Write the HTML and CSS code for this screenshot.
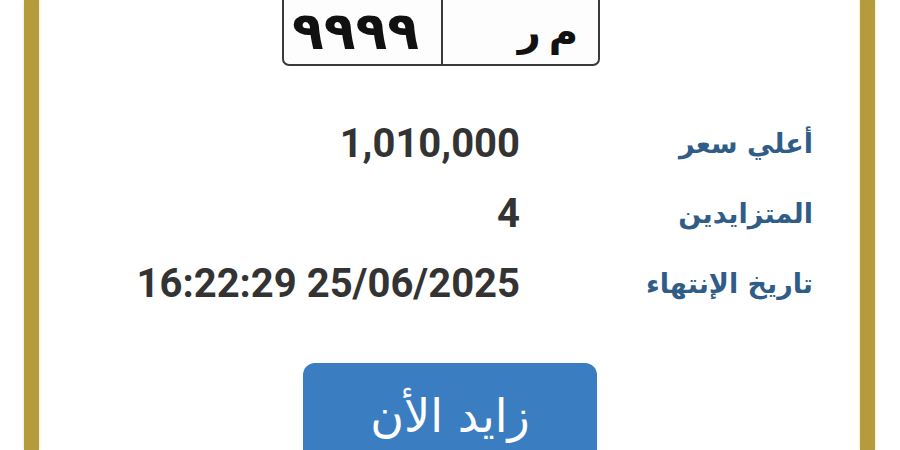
FILE: index.html
```html
<!DOCTYPE html>
<html lang="ar">
<head>
<meta charset="utf-8">
<link rel="stylesheet" href="styles.css">
</head>
<body>
<div class="frame">
  <div class="bar"></div>
  <main class="card">
    <div class="plate">
      <div class="plate-cell plate-num" dir="rtl">٩٩٩٩</div>
      <div class="plate-cell plate-letters" dir="rtl">م ر</div>
    </div>
    <div class="rows">
      <div class="row">
        <div class="value">1,010,000</div>
        <div class="label" dir="rtl">أعلي سعر</div>
      </div>
      <div class="row">
        <div class="value">4</div>
        <div class="label" dir="rtl">المتزايدين</div>
      </div>
      <div class="row">
        <div class="value">16:22:29 25/06/2025</div>
        <div class="label" dir="rtl">تاريخ الإنتهاء</div>
      </div>
    </div>
    <div class="btn" dir="rtl">زايد الأن</div>
  </main>
  <div class="bar"></div>
</div>
</body>
</html>
```
FILE: styles.css
```css
html, body {
  margin: 0;
  padding: 0;
  background: #ffffff;
  width: 900px;
  height: 450px;
  overflow: hidden;
}
.frame {
  display: flex;
  height: 450px;
  padding-left: 24px;
  padding-right: 25px;
}
.bar {
  width: 15px;
  flex: none;
  background: #b59b3e;
  box-shadow: 0 0 3px rgba(230, 210, 120, 0.7);
}
.card {
  flex: 1;
  display: flex;
  flex-direction: column;
  overflow: hidden;
}
.plate {
  margin-top: -10px;
  margin-left: 243px;
  width: 318px;
  height: 76px;
  box-sizing: border-box;
  border: 2px solid #3a3a3a;
  border-radius: 7px;
  display: flex;
  flex: none;
  background: #fdfdfd;
}
.plate-cell {
  box-sizing: border-box;
  display: flex;
  align-items: center;
  font-family: "DejaVu Sans", sans-serif;
  color: #111;
  line-height: 1;
  padding-top: 6px;
}
.plate-num {
  width: 159px;
  border-right: 2px solid #3a3a3a;
  font-size: 52px;
  font-weight: bold;
  justify-content: flex-end;
  padding-left: 8px;
  letter-spacing: -2px;
}
.plate-letters {
  flex: 1;
  font-size: 40px;
  font-weight: bold;
  justify-content: flex-start;
  padding-right: 20px;
  word-spacing: -6px;
}
.rows {
  margin-top: 42px;
  display: flex;
  flex-direction: column;
}
.row {
  display: grid;
  grid-template-columns: 481px 273px;
  column-gap: 20px;
  height: 70px;
  align-items: center;
}
.value {
  text-align: right;
  font-family: Roboto, "Liberation Sans", sans-serif;
  font-weight: bold;
  font-size: 40px;
  color: #333333;
}
.label {
  text-align: right;
  font-family: "DejaVu Sans", sans-serif;
  font-weight: bold;
  font-size: 27px;
  color: #2f5d88;
}
.btn {
  margin-top: 45px;
  margin-left: 264px;
  width: 294px;
  height: 110px;
  flex: none;
  background: #3b7dc1;
  border-radius: 12px;
  color: #ffffff;
  font-family: "DejaVu Sans", sans-serif;
  font-size: 46px;
  text-align: center;
  padding-top: 26px;
  box-sizing: border-box;
}
```
